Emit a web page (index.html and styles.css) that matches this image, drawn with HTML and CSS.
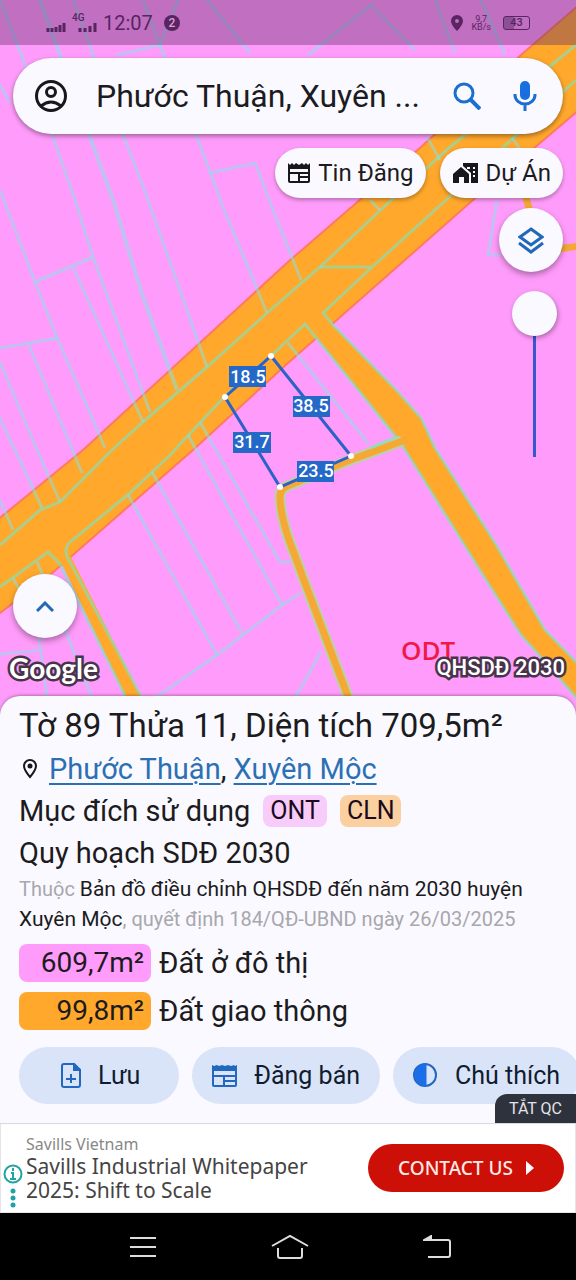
FILE: index.html
```
<!DOCTYPE html>
<html lang="vi">
<head>
    <meta charset="UTF-8">
    <meta name="viewport" content="width=device-width, initial-scale=1.0">
    <title>Bản đồ quy hoạch</title>
    <link rel="stylesheet" href="styles.css">
</head>
<body>
    <section class="map">
        <svg class="map-canvas" viewBox="0 0 576 720" preserveAspectRatio="xMidYMin slice" aria-hidden="true">
            <!-- đường giao thông -->
            <path class="road main-road" d="M-4 521L83 450L288 262L421 147L521 55L580 4V109L473 200L288 363L193 450L50 575L-4 616Z"/>
            <path class="road" d="M305 324L323 313L333 325L398 392L421 418L435 448L495 543L545 630L580 666V702L541 657L521 635L488 583L402 445L396 437Z"/>
            <path class="road" d="M60 560L70 555L143 700H127Z"/>
            <path class="lane-edge" d="M402 441L345 462L290 485Q280 488 280 497Q280 512 288 537L305 583L350 702"/>
            <path class="lane" d="M408 439L345 462L290 485Q280 488 280 497Q280 512 288 537L305 583L350 702"/>
            <path class="lane" d="M524 190L530 212M558 249L580 246"/>
            <!-- mép đường -->
            <g class="edge">
                <path d="M0 545L40 510L60 502L112 450L143 422L207 367L267 313L320 267L388 203L450 147L576 45"/>
                <path d="M0 587L48 552L60 564L127 700M143 700L70 562Q62 550 70 542L130 493L170 455L224 397L271 356L305 324L396 437L370 448"/>
                <path d="M320 267H371M576 80L446 200L371 268L323 313L333 325L398 392L421 418L435 448L495 543L545 630L580 666"/>
                <path d="M402 445L488 583L521 635L541 657L580 702"/>
            </g>
            <!-- ranh thửa -->
            <g class="parcel">
                <path d="M0 0L53 137L75 200L93 257L150 412"/>
                <path class="wide" d="M40 0L90 137L113 200L143 297L177 390"/>
                <path d="M73 0L93 55L124 137L148 200L207 367"/>
                <path d="M0 85L10 103M0 190L35 282L58 340L105 448"/>
                <path d="M35 282L93 257M73 267L143 422M0 348L58 338M28 343L82 473M0 362L37 450L60 502M0 418L42 508M0 500L13 530"/>
                <path d="M143 0L163 53L197 137L223 207L267 313"/>
                <path d="M210 173L255 163L273 210L301 280M117 55L160 45L178 0M207 0L250 53"/>
                <path d="M308 55L371 5L415 50M435 0L455 53M481 0L505 55M427 137L440 160M512 137L520 150M370 200L380 210"/>
                <path d="M497 200L488 255H500"/>
                <path d="M128 495L217 655M152 472L242 633M188 435L282 605M200 422L280 562H290"/>
                <path d="M155 698L217 655L282 605L301 593M321 652L295 698M288 343L368 443"/>
                <path d="M0 654L42 650M38 630L47 698M63 625L92 698M13 578L25 600M37 562L45 580"/>
            </g>
            <!-- kích thước thửa đất -->
            <path class="measure" d="M225 397L271 356L351 456L280 487Z"/>
            <g class="dot">
                <circle cx="225" cy="397" r="3"/>
                <circle cx="271" cy="356" r="3"/>
                <circle cx="351" cy="456" r="3"/>
                <circle cx="280" cy="487" r="3"/>
            </g>
            <g class="size-box">
                <rect x="229" y="366" width="37" height="21"/>
                <rect x="293" y="396" width="37" height="21"/>
                <rect x="233" y="432" width="38" height="21"/>
                <rect x="297" y="461" width="37" height="21"/>
            </g>
            <g class="size-text">
                <text x="248" y="383">18.5</text>
                <text x="311" y="412">38.5</text>
                <text x="252" y="448">31.7</text>
                <text x="316" y="477">23.5</text>
            </g>
            <text class="zone" x="401" y="660">ODT</text>
        </svg>

        <div class="status">
            <svg width="20" height="10" viewBox="0 0 20 10"><path d="M2 6v4M6 6v4M10 5v5M14 3v7M18 1v9" stroke="currentColor" stroke-width="3"/></svg>
            <div class="signal">
                <span>4G</span>
                <svg width="20" height="10" viewBox="0 0 20 10"><path d="M2 6v4M7 6v4M12 4v6M17 1v9" stroke="currentColor" stroke-width="3"/></svg>
            </div>
            <time>12:07</time>
            <span class="count">2</span>
            <svg class="pin" width="12" height="16" viewBox="0 0 12 16"><path fill="currentColor" fill-rule="evenodd" d="M6 0a6 6 0 0 0-6 6c0 4 6 10 6 10s6-6 6-10a6 6 0 0 0-6-6zm0 4a2 2 0 1 1 0 4 2 2 0 0 1 0-4z"/></svg>
            <div class="speed"><span>9,7</span><span>KB/s</span></div>
            <div class="battery">43</div>
        </div>

        <form class="search">
            <button type="button" class="icon-btn" aria-label="Tài khoản">
                <svg width="34" height="34" viewBox="0 0 34 34" fill="none" stroke="#17171c" stroke-width="3"><circle cx="17" cy="17" r="14.500"/><circle cx="17" cy="13" r="4.500"/><path d="M7 27q10-8 20 0"/></svg>
            </button>
            <input type="text" value="Phước Thuận, Xuyên ..." aria-label="Tìm kiếm">
            <button type="button" class="icon-btn" aria-label="Tìm">
                <svg width="28" height="28" viewBox="0 0 28 28" fill="none" stroke="#1a6fd0" stroke-width="3"><circle cx="11" cy="11" r="9"/><path d="M17 17l10 10" stroke-width="4"/></svg>
            </button>
            <button type="button" class="icon-btn mic" aria-label="Giọng nói">
                <svg width="24" height="32" viewBox="0 0 24 32"><rect x="7" y="1" width="10" height="19" rx="5" fill="#1a6fe0"/><path d="M2 14v1a10 9 0 0 0 20 0v-1M12 24v7" fill="none" stroke="#1a6fd0" stroke-width="3"/></svg>
            </button>
        </form>

        <div class="chips">
            <button type="button">
                <svg width="22" height="20" viewBox="0 0 22 20"><path fill="#17171c" fill-rule="evenodd" d="M0 0l2 2 2-2 2 2 2-2 3 2 3-2 2 2 2-2 2 2 2-2v18q0 2-2 2H2q-2 0-2-2zM2 6v3h18V6zm0 5v7h8v-7zm10 0v2h8v-2zm0 4v3h8v-3z"/></svg>
                Tin Đăng
            </button>
            <button type="button">
                <svg width="25" height="20" viewBox="0 0 25 20"><path fill="#17171c" fill-rule="evenodd" d="M0 11l8-7 8 7v9h-5v-6H6v6H0zM10 0h15v20h-7V10l-8-7zM20 4v2h2V4zm0 4v2h2V8zm0 4v2h2v-2zM14 4v2h3V4z"/></svg>
                Dự Án
            </button>
        </div>

        <div class="tools">
            <button type="button" class="round" aria-label="Lớp bản đồ">
                <svg width="26" height="28" viewBox="0 0 26 28" fill="none" stroke="#2268b8" stroke-width="3"><path d="M13 3l11 8-11 8-11-8zM1 17l12 9 12-9"/></svg>
            </button>
            <input class="opacity" type="range" min="0" max="100" value="0" aria-label="Độ mờ">
        </div>

        <button type="button" class="round expand" aria-label="Mở rộng">
            <svg width="18" height="11" viewBox="0 0 18 11" fill="none" stroke="#2268b8" stroke-width="3"><path d="M1 10l8-8 8 8"/></svg>
        </button>
        <div class="map-footer">
            <span class="google">Google</span>
            <span class="layer-name">QHSDĐ 2030</span>
        </div>
    </section>

    <section class="sheet">
        <h1>Tờ 89 Thửa 11, Diện tích 709,5m²</h1>
        <p class="row address">
            <svg width="14" height="20" viewBox="0 0 14 20"><path d="M7 1a6 6 0 0 0-6 6c0 4 6 11 6 11s6-7 6-11a6 6 0 0 0-6-6z" fill="none" stroke="#17171c" stroke-width="2"/><circle cx="7" cy="7" r="2.500" fill="#17171c"/></svg>
            <span><a href="#">Phước Thuận</a>, <a href="#">Xuyên Mộc</a></span>
        </p>
        <p class="row purpose">Mục đích sử dụng <span class="tag ont">ONT</span><span class="tag cln">CLN</span></p>
        <p class="row">Quy hoạch SDĐ 2030</p>
        <p class="source">Thuộc <b>Bản đồ điều chỉnh QHSDĐ đến năm 2030 huyện Xuyên Mộc</b>, quyết định 184/QĐ-UBND ngày 26/03/2025</p>
        <ul class="areas">
            <li><span class="area pink">609,7m²</span>Đất ở đô thị</li>
            <li><span class="area orange">99,8m²</span>Đất giao thông</li>
        </ul>
        <div class="actions">
            <button type="button" class="save">
                <svg width="20" height="25" viewBox="0 0 20 25" fill="none" stroke="#2268c0" stroke-width="2"><path d="M1 3q0-2 2-2h10l6 6v15q0 2-2 2H3q-2 0-2-2zM10 11v9M5 16h10"/><path d="M13 1v6h6z" fill="#2268c0"/></svg>
                Lưu
            </button>
            <button type="button">
                <svg width="25" height="22" viewBox="0 0 25 22"><path fill="#2268c0" fill-rule="evenodd" d="M0 0l2 1 3-1 2 1 3-1 3 1 3-1 3 1 3-1 1 1 2-1v20q0 2-2 2H2q-2 0-2-2zM2 6v4h21V6zm0 6v8h9v-8zm11 0v3h10v-3zm0 5v3h10v-3z"/></svg>
                Đăng bán
            </button>
            <button type="button">
                <svg width="25" height="25" viewBox="0 0 25 25"><circle cx="12" cy="12" r="11" fill="none" stroke="#2268c0" stroke-width="2"/><path d="M13 1a11 11 0 0 0 0 22z" fill="#1a6fe8" stroke="#1a6fe8"/></svg>
                Chú thích
            </button>
        </div>
        <button type="button" class="hide-ad">TẮT QC</button>
    </section>

    <section class="ad">
        <div class="ad-marks">
            <svg width="20" height="20" viewBox="0 0 20 20" fill="none" stroke="#1fa3a3" stroke-width="2"><circle cx="10" cy="10" r="8.500"/><path d="M8 9h2v5M7 15h6M10 4v3" /></svg>
            <svg width="6" height="20" viewBox="0 0 6 20" fill="#1fa3a3"><circle cx="3" cy="3" r="2.500"/><circle cx="3" cy="10" r="2.500"/><circle cx="3" cy="17" r="2.500"/></svg>
        </div>
        <div class="ad-text">
            <small>Savills Vietnam</small>
            <p>Savills Industrial Whitepaper 2025: Shift to Scale</p>
        </div>
        <a class="contact" href="#">CONTACT US
            <svg width="9" height="16" viewBox="0 0 9 16"><path d="M1 1l8 7-8 7z" fill="#fff"/></svg>
        </a>
    </section>

    <nav class="system-nav">
        <button type="button" aria-label="Gần đây">
            <svg width="28" height="22" viewBox="0 0 28 22"><path d="M1 2h26M1 11h26M1 20h26"/></svg>
        </button>
        <button type="button" aria-label="Màn hình chính">
            <svg width="38" height="26" viewBox="0 0 38 26"><path d="M1 12L19 2l18 10M7 14v8q0 2 2 2h20q2 0 2-2v-8"/></svg>
        </button>
        <button type="button" aria-label="Quay lại">
            <svg width="28" height="24" viewBox="0 0 28 24"><path d="M5 22h20q2 0 2-2V7q0-2-2-2H2"/><path d="M8 1L1 5h7z" fill="#ddd"/></svg>
        </button>
    </nav>
</body>
</html>
```

FILE: styles.css
```
* {
    box-sizing: border-box;
}

body {
    margin: 0;
    min-height: 100vh;
    display: flex;
    flex-direction: column;
    background-color: #faf9ff;
    color: #1b1b20;
    font-family: Roboto, "Noto Sans", sans-serif;
}

button {
    border: none;
    padding: 0;
    background: none;
    color: inherit;
    font-family: inherit;
    cursor: pointer;
}

h1, p, ul {
    margin: 0;
    padding: 0;
}

svg {
    flex-shrink: 0;
}

/* Bản đồ */
.map {
    position: relative;
    flex: 1;
    min-height: 640px;
    display: flex;
    flex-direction: column;
    background-color: #ff9cfb;
    overflow: hidden;
}

.map-canvas {
    position: absolute;
    top: 0;
    left: 0;
    width: 100%;
    height: 100%;
}

.map > :not(.map-canvas) {
    position: relative;
}

.road {
    fill: #ffa82c;
}

.main-road {
    stroke: #ff7a5c;
    stroke-width: 2;
}

.lane-edge, .lane, .edge, .parcel, .measure {
    fill: none;
}

.lane-edge {
    stroke: #bcd0a8;
    stroke-width: 11;
}

.lane {
    stroke: #f5a934;
    stroke-width: 7;
}

.edge {
    stroke: rgba(120, 230, 200, 0.6);
    stroke-width: 3;
}

.parcel {
    stroke: rgba(130, 230, 235, 0.5);
    stroke-width: 3;
}

.parcel .wide {
    stroke-width: 4;
}

.measure {
    stroke: #2a62c8;
    stroke-width: 3;
}

.dot {
    fill: #fff;
}

.size-box {
    fill: #2468c8;
}

.size-text {
    fill: #fff;
    font-size: 18px;
    font-weight: 500;
    text-anchor: middle;
}

.zone {
    fill: #f01848;
    font-family: "Open Sans", sans-serif;
    font-size: 26px;
    font-weight: 600;
}

/* Thanh trạng thái */
.status {
    display: flex;
    align-items: center;
    height: 45px;
    padding: 0 46px;
    background-color: rgba(90, 40, 100, 0.38);
    color: #582560;
}

.status > svg:first-child {
    margin-top: 8px;
}

.signal {
    display: flex;
    flex-direction: column;
    width: 26px;
    margin: 0 5px 0 6px;
}

.signal span {
    font-size: 10px;
    font-weight: 500;
    line-height: 8px;
}

.signal svg {
    align-self: flex-end;
}

.status time {
    font-size: 20px;
}

.count {
    width: 16px;
    height: 16px;
    margin-left: 11px;
    border-radius: 50%;
    background-color: #582560;
    color: #d9a0dc;
    font-size: 12px;
    font-weight: 500;
    line-height: 16px;
    text-align: center;
}

.pin {
    margin-left: auto;
}

.speed {
    display: flex;
    flex-direction: column;
    margin: 0 12px 0 8px;
    font-size: 9px;
    line-height: 8px;
    text-align: center;
}

.battery {
    width: 27px;
    height: 14px;
    border: 1px solid #582560;
    border-radius: 3px;
    background: linear-gradient(90deg, #8c5096 40%, transparent 40%);
    font-size: 11px;
    font-weight: 500;
    line-height: 12px;
    text-align: center;
}

/* Tìm kiếm */
.search {
    display: flex;
    align-items: center;
    height: 76px;
    margin: 13px 13px 0;
    padding: 0 26px 0 21px;
    border-radius: 38px;
    background-color: #faf9ff;
    box-shadow: 0 2px 5px rgba(0, 0, 0, 0.4);
}

.search input {
    flex: 1;
    min-width: 0;
    margin-left: 28px;
    padding: 0;
    border: none;
    outline: none;
    background: none;
    color: #1b1b20;
    font-family: inherit;
    font-size: 32px;
}

.icon-btn {
    display: flex;
}

.mic {
    margin-left: 32px;
}

.chips {
    display: flex;
    justify-content: flex-end;
    gap: 14px;
    margin: 14px 13px 0;
}

.chips button {
    display: flex;
    align-items: center;
    gap: 8px;
    height: 50px;
    padding: 0 12px 0 13px;
    border-radius: 25px;
    background-color: #faf9ff;
    box-shadow: 0 2px 4px rgba(0, 0, 0, 0.3);
    font-size: 24px;
}

.tools {
    display: flex;
    flex-direction: column;
    align-items: flex-end;
    gap: 19px;
    margin: 10px 13px 0;
}

.round {
    display: flex;
    align-items: center;
    justify-content: center;
    width: 64px;
    height: 64px;
    border-radius: 50%;
    background-color: #faf9ff;
    box-shadow: 0 3px 6px rgba(0, 0, 0, 0.35);
}

.opacity {
    appearance: none;
    writing-mode: vertical-lr;
    width: 45px;
    height: 166px;
    margin: 0 6px 0 0;
    background: linear-gradient(#3458d0, #3458d0) center / 3px 100% no-repeat;
}

.opacity::-webkit-slider-thumb {
    appearance: none;
    width: 45px;
    height: 45px;
    border-radius: 50%;
    background-color: #faf9ff;
    box-shadow: 1px 2px 5px rgba(0, 0, 0, 0.35);
}

.expand {
    margin: auto 0 0 13px;
}

.map-footer {
    display: flex;
    align-items: center;
    justify-content: space-between;
    margin: 13px 11px 29px 9px;
    color: #fff;
    line-height: 34px;
    -webkit-text-stroke: 5px #47344a;
    paint-order: stroke fill;
}

.google {
    font-family: Lato, sans-serif;
    font-size: 28px;
    font-weight: 700;
}

.layer-name {
    font-size: 22px;
    font-weight: 500;
}

/* Thông tin thửa đất */
.sheet {
    position: relative;
    margin-top: -18px;
    padding: 8px 19px 19px;
    border-radius: 20px 20px 0 0;
    background-color: #faf9ff;
    box-shadow: 0 -1px 3px rgba(0, 0, 0, 0.3);
}

.sheet h1 {
    font-size: 33px;
    font-weight: 400;
    line-height: 44px;
}

.row {
    display: flex;
    align-items: center;
    font-size: 29px;
    line-height: 42px;
}

.address {
    gap: 12px;
    padding-left: 4px;
}

.address a {
    color: #2c70b4;
    text-decoration-thickness: 2px;
    text-underline-offset: 4px;
}

.tag {
    margin-left: 13px;
    padding: 0 7px;
    border-radius: 8px;
    color: #1b0a1b;
    font-size: 25px;
    line-height: 32px;
}

.ont {
    background-color: #f8ccfa;
}

.cln {
    background-color: #fad0a0;
}

.source {
    color: #a8a7ac;
    font-size: 20px;
    line-height: 30px;
}

.source b {
    color: #1b1b20;
    font-size: 21px;
    font-weight: 400;
}

.areas {
    display: grid;
    gap: 10px;
    margin-top: 10px;
    list-style: none;
}

.areas li {
    display: flex;
    gap: 8px;
    font-size: 29px;
    line-height: 38px;
}

.area {
    width: 132px;
    padding-right: 7px;
    border-radius: 8px;
    font-size: 28px;
    text-align: right;
}

.pink {
    background-color: #ff9cfb;
}

.orange {
    background-color: #ffa82c;
}

.actions {
    display: flex;
    gap: 13px;
    margin: 17px -19px 0 0;
    overflow: hidden;
}

.actions button {
    display: flex;
    flex-shrink: 0;
    align-items: center;
    gap: 17px;
    height: 57px;
    padding: 0 20px;
    border-radius: 29px;
    background-color: #dae4f8;
    color: #101c30;
    font-size: 25px;
}

.actions .save {
    padding: 0 39px 0 42px;
}

.hide-ad {
    position: absolute;
    right: 0;
    bottom: 0;
    width: 81px;
    height: 29px;
    border-radius: 12px 0 0 0;
    background-color: #2e323c;
    color: #e4e4e8;
    font-size: 16px;
}

/* Quảng cáo */
.ad {
    display: flex;
    align-items: center;
    min-height: 90px;
    padding: 0 11px 0 2px;
    border: 1px solid #e4e4e8;
    background-color: #fff;
    color: #444;
    font-family: "Noto Sans", sans-serif;
}

.ad-marks {
    display: flex;
    flex-direction: column;
    align-items: center;
    gap: 4px;
    margin: 36px 3px 0 0;
}

.ad-text {
    flex: 1;
    padding-right: 30px;
}

.ad-text small {
    display: block;
    color: #888;
    font-size: 16px;
    line-height: 20px;
}

.ad-text p {
    font-size: 21px;
    line-height: 24px;
}

.contact {
    display: flex;
    align-items: center;
    justify-content: center;
    gap: 12px;
    width: 196px;
    height: 48px;
    border-radius: 24px;
    background-color: #cc1008;
    color: #ffe8e4;
    font-size: 19px;
    font-weight: 500;
    text-decoration: none;
}

/* Thanh điều hướng */
.system-nav {
    display: flex;
    align-items: center;
    justify-content: space-between;
    height: 67px;
    padding: 0 120px 0 124px;
    background-color: #000;
}

.system-nav button {
    display: flex;
    justify-content: center;
    width: 38px;
}

.system-nav svg {
    fill: none;
    stroke: #ddd;
    stroke-width: 2;
}
```
